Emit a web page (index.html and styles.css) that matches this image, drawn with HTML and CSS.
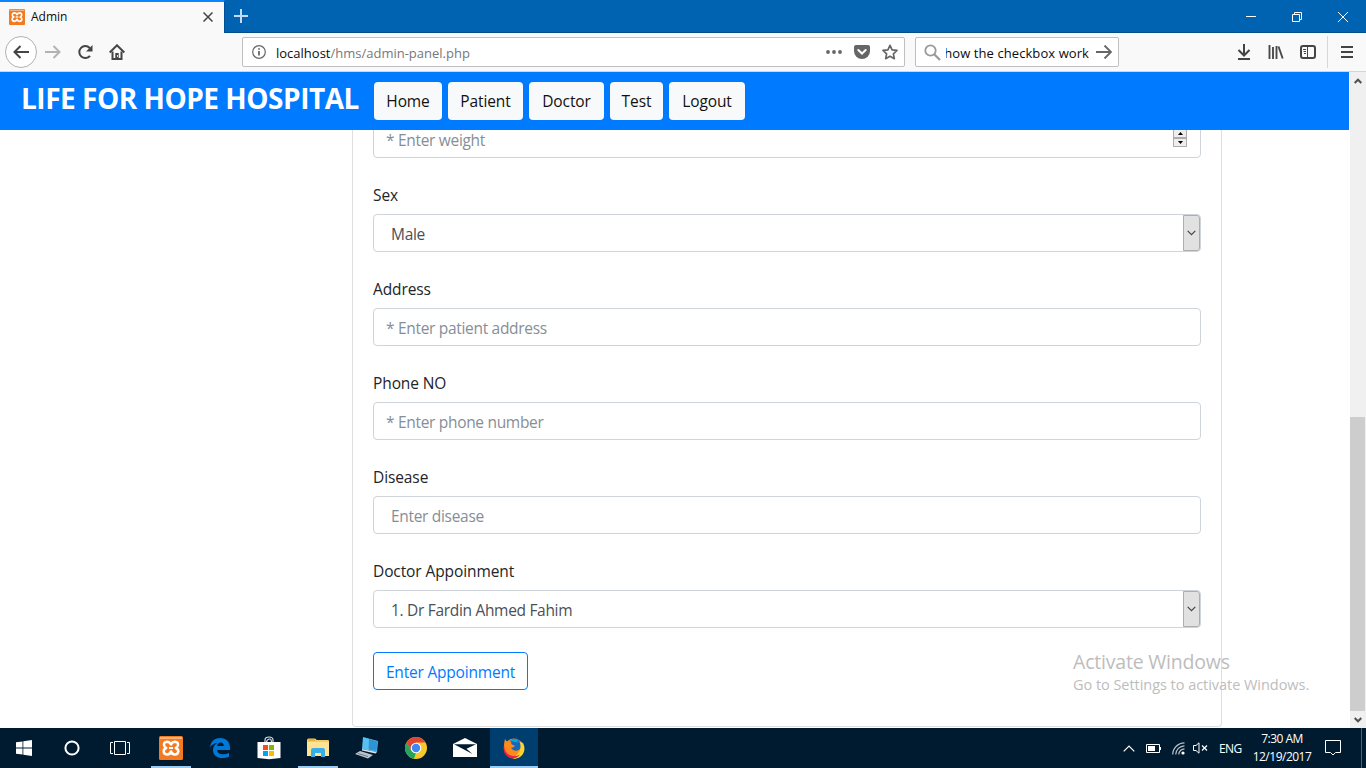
FILE: index.html
```html
<!DOCTYPE html>
<html lang="en">
<head>
<meta charset="utf-8">
<title>Admin</title>
<link rel="stylesheet" href="styles.css">
</head>
<body>
<svg class="defs" width="0" height="0">
  <symbol id="xampp" viewBox="0 0 24 24">
    <rect width="24" height="24" rx="1.500" fill="#f37a20"/>
    <path d="M1 1h22v2H1z" fill="#fab07a"/>
    <path d="M12 8.500Q10.500 5.800 8 5.800 4.800 6 5 9q.2 2.200 2.200 3Q4.700 13 4.700 15.300q.3 3.200 3.600 3.200 2.700 0 3.700-3 1 3 3.700 3 3.300 0 3.600-3.200 0-2.300-2.500-3.300 2-.8 2.200-3 .2-3-3-3.200-2.500 0-4 2.700z" fill="none" stroke="#fff" stroke-width="2.500" stroke-linejoin="round"/>
    <path d="M10 12h4" stroke="#fff" stroke-width="2"/>
  </symbol>
</svg>
<div class="screen">
  <div class="titlebar">
    <div class="tab">
      <svg class="favicon" width="16" height="16"><use href="#xampp"/></svg>
      <span class="tab-title">Admin</span>
      <svg class="tab-close" width="10" height="10" viewBox="0 0 10 10"><path d="M.5.5l9 9M9.500.5l-9 9" stroke="#444" stroke-width="1.500"/></svg>
    </div>
    <svg class="newtab" width="14" height="14" viewBox="0 0 14 14"><path d="M7 0v14M0 7h14" stroke="#c3dcf3" stroke-width="2"/></svg>
    <div class="winctl">
      <svg width="10" height="10" viewBox="0 0 10 10"><path d="M0 4.500h10" stroke="#fff"/></svg>
      <svg width="10" height="10" viewBox="0 0 10 10"><path d="M.5 2.500h7v7h-7zM2.500 2.500v-2h7v7h-2" fill="none" stroke="#fff"/></svg>
      <svg width="10" height="10" viewBox="0 0 10 10"><path d="M0 0l10 10M10 0L0 10" stroke="#fff"/></svg>
    </div>
  </div>
  <div class="toolbar">
    <div class="back"><svg width="16" height="14" viewBox="0 0 16 14"><path d="M16 7H1.500M7.500 1l-6 6 6 6" fill="none" stroke="#444" stroke-width="2"/></svg></div>
    <svg class="forward" width="16" height="14" viewBox="0 0 16 14"><path d="M0 7h14.500M8.500 1l6 6-6 6" fill="none" stroke="#b3b3b3" stroke-width="2"/></svg>
    <svg class="reload" width="16" height="16" viewBox="0 0 16 16"><path d="M13 11.800A6 6 0 1 1 12.700 4" fill="none" stroke="#444" stroke-width="2"/><path d="M15.500 1v6.500H9z" fill="#444"/></svg>
    <svg class="home" width="16" height="16" viewBox="0 0 16 16"><path d="M.7 8.500L8 1.300l7.300 7.200" fill="none" stroke="#444" stroke-width="2"/><path d="M3.500 7.500V15h9V7.500" fill="none" stroke="#444" stroke-width="2"/><path d="M6.300 15V9h3.400v6z" fill="#444"/><path d="M8.500 11v2" stroke="#ddd"/></svg>
    <div class="urlbar">
      <svg width="14" height="14" viewBox="0 0 14 14"><circle cx="7" cy="7" r="6.300" fill="none" stroke="#666" stroke-width="1.200"/><path d="M7 6v4.500M7 3.300v1.500" stroke="#555" stroke-width="1.600"/></svg>
      <span class="url">localhost<span class="path">/hms/admin-panel.php</span></span>
      <svg class="dots" width="16" height="16" viewBox="0 0 16 16"><g fill="#666"><circle cx="2" cy="8" r="1.900"/><circle cx="8" cy="8" r="1.900"/><circle cx="14" cy="8" r="1.900"/></g></svg>
      <svg class="pocket" width="16" height="16" viewBox="0 0 16 16"><path d="M2 1h12q2 0 2 2v4a8 8 0 0 1-16 0V3q0-2 2-2z" fill="#666"/><path d="M4.300 6L8 9.500 11.700 6" fill="none" stroke="#fff" stroke-width="2" stroke-linecap="round"/></svg>
      <svg width="16" height="16" viewBox="0 0 16 16"><path d="M8 1.300l2.100 4.500 4.900.6-3.600 3.400.9 4.900L8 12.300l-4.300 2.400.9-4.900L1 6.400l4.900-.6z" fill="none" stroke="#666" stroke-width="1.700" stroke-linejoin="round"/></svg>
    </div>
    <div class="searchbar">
      <svg width="17" height="17" viewBox="0 0 17 17"><circle cx="6.500" cy="6.500" r="5.200" fill="none" stroke="#999" stroke-width="1.800"/><path d="M10.200 10.200l5.800 5.800" stroke="#999" stroke-width="2.200"/></svg>
      <span class="query"><span>how the checkbox work</span></span>
      <svg width="16" height="14" viewBox="0 0 16 14"><path d="M0 7h15M8.500.5L15 7l-6.500 6.500" fill="none" stroke="#666" stroke-width="1.900"/></svg>
    </div>
    <div class="tools">
      <svg width="14" height="16" viewBox="0 0 14 16"><path d="M7 0v11M1.500 6L7 11.500 12.500 6M1 15h12" fill="none" stroke="#444" stroke-width="2"/></svg>
      <svg width="16" height="14" viewBox="0 0 16 14"><path d="M1.500 0v14M5 2v12M8.500 1v13M10.500 1.500l4.200 12" fill="none" stroke="#4a4a4a" stroke-width="1.900"/></svg>
      <svg width="16" height="14" viewBox="0 0 16 14"><rect x="1" y="1" width="14" height="12" rx="2" fill="none" stroke="#444" stroke-width="2"/><path d="M7.500 1v12M3 4.500h3M3.500 6.500H6M4 8.500h2" stroke="#444"/></svg>
      <div class="menu"><svg width="12" height="12" viewBox="0 0 12 12"><path d="M0 1h12M0 6h12M0 11h12" stroke="#444" stroke-width="2"/></svg></div>
    </div>
  </div>

  <div class="viewport">
    <div class="page">
      <header class="site-header">
        <h1>LIFE FOR HOPE HOSPITAL</h1>
        <nav>
          <a class="w-home">Home</a><a class="w-patient">Patient</a><a class="w-doctor">Doctor</a><a class="w-test">Test</a><a class="w-logout">Logout</a>
        </nav>
      </header>
      <form class="card">
        <div class="field"><div class="control">* Enter weight
          <span class="spinner"><i><svg width="5" height="3" viewBox="0 0 5 3"><path d="M2.500 0L5 3H0z"/></svg></i><i><svg width="5" height="3" viewBox="0 0 5 3"><path d="M2.500 3L5 0H0z"/></svg></i></span></div></div>
        <div class="field"><label>Sex</label><div class="control select"><span>Male</span><b><svg width="9" height="6" viewBox="0 0 9 6"><path d="M.7.8l3.800 3.800L8.300.8" fill="none" stroke="#444" stroke-width="1.200"/></svg></b></div></div>
        <div class="field"><label>Address</label><div class="control">* Enter patient address</div></div>
        <div class="field"><label>Phone NO</label><div class="control">* Enter phone number</div></div>
        <div class="field"><label>Disease</label><div class="control indent">Enter disease</div></div>
        <div class="field"><label>Doctor Appoinment</label><div class="control select"><span>1. Dr Fardin Ahmed Fahim</span><b><svg width="9" height="6" viewBox="0 0 9 6"><path d="M.7.8l3.800 3.800L8.300.8" fill="none" stroke="#444" stroke-width="1.200"/></svg></b></div></div>
        <div class="submit">Enter Appoinment</div>
      </form>
    </div>
    <div class="scrollbar">
      <svg class="up" width="8" height="6" viewBox="0 0 8 6"><path d="M.7 5L4 1.700 7.300 5" fill="none" stroke="#505050" stroke-width="2"/></svg>
      <div class="thumb"></div>
      <svg class="down" width="8" height="6" viewBox="0 0 8 6"><path d="M.7 1L4 4.300 7.300 1" fill="none" stroke="#505050" stroke-width="2"/></svg>
    </div>
    <div class="watermark"><div class="wm1">Activate Windows</div><div class="wm2">Go to Settings to activate Windows.</div></div>
  </div>

  <div class="taskbar">
    <div class="sys"><svg width="16" height="16" viewBox="0 0 16 16"><path d="M0 2.300L6.500 1.400V7.600H0zM7.300 1.300L16 0V7.600H7.300zM0 8.400h6.500v6.200L0 13.700zM7.300 8.400H16V16l-8.700-1.300z" fill="#fff"/></svg></div>
    <div class="sys"><svg width="16" height="16" viewBox="0 0 16 16"><circle cx="8" cy="8" r="6.600" fill="none" stroke="#fff" stroke-width="2"/></svg></div>
    <div class="sys"><svg width="20" height="14" viewBox="0 0 20 14"><path d="M4.500.5h11v13h-11zM3 1.500H.5v11H3M17 1.500h2.500v11H17" fill="none" stroke="#fff"/></svg></div>
    <div class="apps">
      <div class="app open"><svg width="24" height="24"><use href="#xampp"/></svg></div>
      <div class="app"><svg width="20" height="20" viewBox="0 0 20 20"><path d="M0 9C1 3 5 0 10.300 0 16 0 20 4 20 9.500V12H7c.2 3 3 4.300 6 4.300 2.300 0 4.300-.6 6-1.600v4c-2 1-4.300 1.400-7 1.400-5.500 0-9-3.300-9-8 0-3.400 1.800-6 4.700-7.400C4.400 5.300 1.700 6.700 0 9zm7.200-1h6.600c0-2.300-1.200-3.500-3.200-3.500S7.500 5.800 7.200 8z" fill="#0078d7"/></svg></div>
      <div class="app store"><svg width="24" height="24" viewBox="0 0 24 24"><path d="M8 7V4q0-3 4-3t4 3v3M9.500 7q0-4 3.500-4 1.500 0 1.500 4" fill="none" stroke="#ddd" stroke-width="1.200"/><path d="M.5 6h23v16l-11.500 1.300L.5 22z" fill="#fff"/><path d="M6 9h5v5H6z" fill="#f25022"/><path d="M12 9h5v5h-5z" fill="#7fba00"/><path d="M6 15h5v5H6z" fill="#00a4ef"/><path d="M12 15h5v5h-5z" fill="#ffb900"/></svg></div>
      <div class="app open"><svg width="22" height="20" viewBox="0 0 22 20"><path d="M0 2q0-1.500 1.500-1.500H8q1 0 1.500 1.500H21q1 0 1 1v15H0z" fill="#f4cc63"/><path d="M1.500 2H8" stroke="#d89b18"/><path d="M0 4h22v14H0z" fill="#ffe394"/><path d="M4 19v-7q0-2 2-2h10q2 0 2 2v7h-4v-4H8v4z" fill="#37aee5"/></svg></div>
      <div class="app"><svg width="24" height="22" viewBox="0 0 24 22"><path d="M8 0l15 4-1 11-15-3z" fill="#58bff0"/><path d="M14 2l8.500 2.300-.9 9.700-8-1.500z" fill="#2f94d4"/><path d="M7 12l15 3-1.500 1.500L7 13.500z" fill="#d9e2e8"/><path d="M0 17l5-3 13 4-5 3.500z" fill="#bcc5cc"/><path d="M3 16.500l10 3" stroke="#6d7880"/></svg></div>
      <div class="app"><svg width="22" height="22" viewBox="0 0 22 22"><circle cx="11" cy="11" r="11" fill="#f7c928"/><path d="M1.500 5.500A11 11 0 0 1 20.500 5.500H11L6.200 13.700z" fill="#df4635"/><path d="M1.500 5.500L6.300 13.700 11 16l-1 6A11 11 0 0 1 1.500 5.500z" fill="#27a35a"/><path d="M11 16l4.500-3L10.500 22 9 21.800z" fill="#f7c928"/><circle cx="11" cy="11" r="5.300" fill="#fff"/><circle cx="11" cy="11" r="4.200" fill="#4285f4"/></svg></div>
      <div class="app mail"><svg width="24" height="19" viewBox="0 0 24 19"><path d="M0 6L12 0l12 6v13H0z" fill="#fff"/><path d="M1 6.200h22l-9.500 4.600L19.500 16z" fill="#001b30"/></svg></div>
      <div class="app active open"><svg width="22" height="22" viewBox="0 0 22 22"><circle cx="11" cy="11.500" r="10" fill="#ff7a1b"/><path d="M13 0q0 3 2.500 5 3 0 4.500 1 3 6 0 11-4 5.500-10 4.500 6-5 6-12z" fill="#ffd329"/><path d="M7 4q3-3 7.500-2 3 3 3 7.500 0 6-6 6T5 9z" fill="#1766b8"/><path d="M7 3.500q3.500-2.500 7.500-1l.5 3-3.500-.5z" fill="#00a9e8"/><path d="M2 2q1 2 2.500 2.500 2-.7 4 .3-1 2 1 3l2.500 1q-1 2-4 2 2 3.500 5.500 3 2-.3 3.500-2-1 6-7 7Q2 17 1 9q0-4 1-7z" fill="#ff8a19"/><path d="M1 8q0 8 6.500 10.500 5 2 9.500-1-4 5-10 3.500Q-1 17.500 1 8z" fill="#e91f4d"/></svg></div>
    </div>
    <div class="tray">
      <svg width="12" height="7" viewBox="0 0 12 7"><path d="M.7 6.300L6 1l5.300 5.300" fill="none" stroke="#fff" stroke-width="1.200"/></svg>
      <svg class="bat" width="15" height="9" viewBox="0 0 15 9"><path d="M.5.5h13v8H.5z" fill="none" stroke="#fff"/><path d="M2 2h7v5H2zM14 3h1v3h-1z" fill="#fff"/></svg>
      <svg class="wifi" width="13" height="13" viewBox="0 0 13 13"><g fill="none" stroke="#b7c1c9" stroke-width="1.200"><path d="M.7 12.500A12 12 0 0 1 12.500.8M3.700 12.500a9 9 0 0 1 8.800-8.700M6.700 12.500a6 6 0 0 1 5.800-5.700"/></g><circle cx="11" cy="11" r="1.600" fill="#fff"/></svg>
      <svg class="vol" width="15" height="12" viewBox="0 0 15 12"><path d="M.5 3.500H3L6 .8v10.400L3 8.500H.5z" fill="none" stroke="#fff"/><path d="M9 3.500l5 5M14 3.500l-5 5" stroke="#fff" stroke-width="1.200"/></svg>
      <span class="lang">ENG</span>
      <div class="clock"><div class="time">7:30 AM</div><div class="date">12/19/2017</div></div>
      <svg class="note" width="16" height="16" viewBox="0 0 16 16"><path d="M.5.5h15v12H10.500l-2.500 2.500-2.500-2.500H.5z" fill="none" stroke="#fff"/></svg>
      <div class="peek"></div>
    </div>
  </div>
</div>
</body>
</html>
```
FILE: styles.css
```css
* { box-sizing: border-box; }
body { margin: 0; font-family: "Open Sans", "Noto Sans", sans-serif; color: #212529; }
svg { display: block; flex: none; }
.defs { position: absolute; }
.screen { width: 1366px; height: 768px; overflow: hidden; display: flex; flex-direction: column; background: #fff; white-space: nowrap; }

.titlebar { height: 33px; flex: none; background: #0063b1; display: flex; border-bottom: 1px solid #004d8a; }
.tab { width: 225px; height: 33px; background: #f9f9fa; border-top: 2px solid #0a84ff; border-right: 1px solid #00519a; display: flex; align-items: center; padding: 0 10px 2px 9px; }
.tab-title { margin-left: 6px; font-size: 12px; letter-spacing: 0; color: #0c0c0d; flex: 1; }
.tab-close { margin: 0 1px 0 0; }
.newtab { margin: 9px 0 0 9px; }
.winctl { margin-left: auto; display: flex; gap: 36px; padding: 12px 18px 0 0; }

.toolbar { height: 39px; flex: none; background: #f9f9fa; border-bottom: 1px solid #d5d5d8; display: flex; align-items: center; padding-left: 5px; }
.back { width: 32px; height: 32px; border: 1px solid #b1b1b1; border-radius: 50%; background: #fff; display: grid; place-items: center; }
.forward { margin-left: 8px; }
.reload { margin-left: 16px; }
.home { margin-left: 16px; }
.urlbar { margin-left: 117px; width: 663px; height: 30px; border: 1px solid #c0c0c3; border-radius: 2px; background: #fff; display: flex; align-items: center; padding: 0 6px 0 9px; }
.url { margin: 2px 0 0 10px; font-size: 13px; letter-spacing: 0; color: #0c0c0d; flex: 1; }
.path { color: #77777a; }
.pocket { margin: 0 12px; }
.searchbar { margin-left: 10px; width: 204px; height: 30px; border: 1px solid #c0c0c3; border-radius: 2px; background: #fff; display: flex; align-items: center; padding: 0 6px 0 8px; }
.query { margin: 2px 7px 0 5px; min-width: 0; overflow: hidden; font-size: 13px; letter-spacing: .08px; color: #0c0c0d; flex: 1; display: flex; justify-content: flex-end; }
.tools { margin-left: auto; display: flex; align-items: center; gap: 16px; }
.tools > svg:first-child { margin-right: 1px; }
.menu { width: 39px; height: 32px; border-left: 1px solid #d7d7db; display: flex; align-items: center; padding-left: 13px; margin-left: -5px; }

.viewport { height: 656px; flex: none; display: flex; position: relative; background: #fff; }
.page { width: 1349px; height: 656px; overflow: hidden; position: relative; }
.site-header { position: absolute; z-index: 2; top: 0; left: 0; width: 1349px; height: 58px; background: #007bff; display: flex; padding: 10px 0 0 21px; }
h1 { margin: -3px 0 0; width: 353px; font-size: 28px; line-height: 38px; font-weight: 700; letter-spacing: -.48px; color: #fff; }
nav { display: flex; gap: 6px; }
nav a { height: 38px; border-radius: 4px; background: #f8f9fa; color: #111; font-size: 15.500px; line-height: 39px; text-align: center; letter-spacing: -.1px; }
.w-home { width: 68px; }
.w-patient { width: 75px; }
.w-doctor { width: 75px; }
.w-test { width: 53px; }
.w-logout { width: 76px; }

.card { margin-left: 352px; width: 870px; height: 655px; border: 1px solid #dfdfdf; border-top: 0; border-radius: 0 0 4px 4px; padding: 48px 20px 36px; font-size: 15.5px; letter-spacing: -.2px; }
.field { margin-bottom: 24px; }
.field label { display: block; height: 24px; line-height: 26px; margin-bottom: 8px; letter-spacing: -.1px; }
.control { height: 38px; border: 1px solid #ced4da; border-radius: 4px; padding: 0 13px 0 12px; line-height: 38px; color: #868e96; letter-spacing: -.31px; display: flex; justify-content: space-between; align-items: flex-start; }
.control, .control span { padding-top: 0; }
.control { line-height: 39px; }
.indent { padding-left: 17px; }
.select { color: #495057; padding: 0 0 0 17px; }
.select b { width: 17px; height: 36px; background: #e1e1e1; border: 1px solid #adadad; border-radius: 0 3px 3px 0; display: grid; place-items: center; }
.spinner { width: 14px; height: 18px; margin-top: 8px; display: flex; flex-direction: column; }
.spinner i { flex: 1; border: 1px solid #adadad; background: #eee; display: grid; place-items: center; }
.submit { width: 155px; height: 38px; border: 1px solid #007bff; border-radius: 4px; color: #007bff; line-height: 38px; text-align: center; }

.scrollbar { margin-left: 1px; width: 16px; height: 656px; background: #f0f0f0; display: flex; flex-direction: column; align-items: center; }
.up { margin-top: 6px; }
.thumb { width: 15px; height: 294px; background: #cdcdcd; margin-top: 333px; align-self: flex-start; }
.down { margin-top: 6px; }
.watermark { position: absolute; z-index: 3; left: 1073px; top: 576px; color: #bdbdbd; }
.wm1 { font-size: 19.500px; line-height: 28px; letter-spacing: -.2px; }
.wm2 { font-size: 14.500px; line-height: 18px; letter-spacing: -.04px; }

.taskbar { height: 40px; flex: none; background: #001b30; display: flex; color: #fff; }
.sys { width: 48px; height: 40px; display: grid; place-items: center; }
.apps { display: flex; gap: 1px; margin-left: 3px; }
.app { width: 48px; height: 40px; display: grid; place-items: center; position: relative; }
.store { padding-bottom: 1px; }
.mail { padding-bottom: 1px; }
.open::after { content: ""; position: absolute; left: 4px; right: 4px; bottom: 0; height: 2px; background: #9acbf2; }
.active { background: #003e70; }
.active::after { left: 0; right: 0; }
.tray { margin-left: auto; display: flex; align-items: center; font-size: 12px; }
.bat { margin-left: 11px; }
.wifi { margin-left: 11px; }
.vol { margin-left: 8px; }
.lang { margin-left: 11px; width: 24px; letter-spacing: -.6px; }
.clock { margin-left: 5px; width: 68px; text-align: center; line-height: 18px; letter-spacing: -.5px; }
.note { margin-left: 9px; }
.peek { margin-left: 20px; width: 5px; height: 40px; border-left: 1px solid #4c6070; }
```
